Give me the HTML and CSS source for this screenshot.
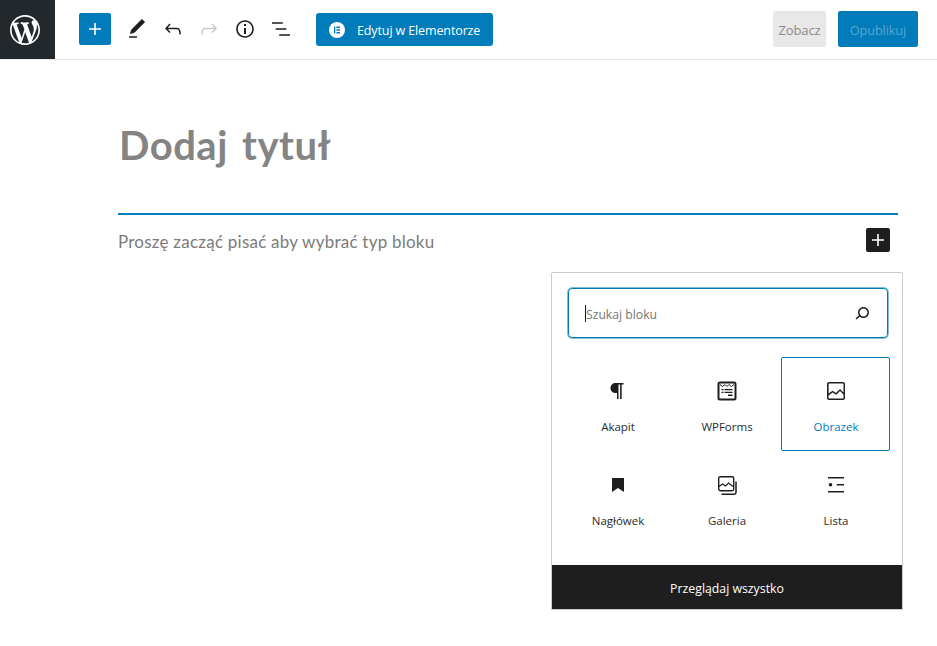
FILE: index.html
```html
<!DOCTYPE html>
<html lang="pl">
<head>
<meta charset="utf-8">
<title>Dodaj tytuł</title>
<link rel="stylesheet" href="styles.css">
</head>
<body>
<header class="toolbar">
  <a class="wp-logo"><svg viewBox="0 0 20 20" width="30" height="30"><path fill="#fff" d="M20 10c0-5.51-4.49-10-10-10C4.48 0 0 4.49 0 10c0 5.52 4.48 10 10 10 5.51 0 10-4.48 10-10zM7.78 15.37L4.37 6.22c.55-.02 1.17-.08 1.17-.08.5-.06.44-1.13-.06-1.11 0 0-1.45.11-2.37.11-.18 0-.37 0-.58-.01C4.12 2.69 6.87 1.11 10 1.11c2.33 0 4.45.87 6.05 2.34-.68-.11-1.65.39-1.65 1.58 0 .74.45 1.36.9 2.1.35.61.55 1.36.55 2.46 0 1.49-1.4 5-1.4 5l-3.03-8.37c.54-.02.82-.17.82-.17.5-.05.44-1.25-.06-1.22 0 0-1.44.12-2.38.12-.87 0-2.33-.12-2.33-.12-.5-.03-.56 1.2-.06 1.22l.92.08 1.26 3.41zM17.41 10c.24-.64.74-1.87.43-4.25.7 1.29 1.05 2.71 1.05 4.25 0 3.29-1.73 6.24-4.4 7.78.97-2.59 1.94-5.2 2.92-7.78zM6.1 18.09C3.12 16.65 1.11 13.53 1.11 10c0-1.3.23-2.48.72-3.59C3.25 10.3 4.67 14.2 6.1 18.09zm4.03-6.63l2.58 6.98c-.86.29-1.76.45-2.71.45-.79 0-1.57-.11-2.29-.33.81-2.38 1.62-4.74 2.42-7.1z"/></svg></a>
  <div class="tools">
    <span class="inserter"><svg viewBox="0 0 24 24" width="24" height="24"><path fill="#fff" d="M18 11.2h-5.2V6h-1.6v5.2H6v1.6h5.2V18h1.6v-5.2H18z"/></svg></span>
    <span class="tool"><svg viewBox="0 0 24 24" width="24" height="24"><path d="M20.1 5.1L16.9 2 6.2 12.7l-1.3 4.4 4.5-1.3L20.1 5.1zM4 20.8h8v-1.5H4v1.5z"/></svg></span>
    <span class="tool"><svg viewBox="0 0 24 24" width="24" height="24"><path d="M18.3 11.7c-.6-.6-1.4-.9-2.3-.9H6.7l2.9-3.3-1.1-1-4.5 5L8.5 16l1-1-2.7-2.7H16c.5 0 .9.2 1.3.5 1 1 1 3.4 1 4.5v.3h1.5v-.2c0-1.5 0-4.3-1.5-5.7z"/></svg></span>
    <span class="tool tool-off"><svg viewBox="0 0 24 24" width="24" height="24"><path d="M15.6 6.5l-1.1 1 2.9 3.3H8c-.9 0-1.7.3-2.3.9-1.4 1.5-1.4 4.2-1.4 5.6v.2h1.5v-.3c0-1.1 0-3.5 1-4.5.3-.3.7-.5 1.3-.5h9.2L14.5 15l1.1 1.1 4.6-4.6-4.6-5z"/></svg></span>
    <span class="tool"><svg viewBox="0 0 24 24" width="24" height="24"><path d="M12 3.2c-4.8 0-8.8 3.9-8.8 8.8 0 4.8 3.9 8.8 8.8 8.8 4.8 0 8.8-3.9 8.8-8.8 0-4.8-4-8.8-8.8-8.8zm0 16c-4 0-7.2-3.3-7.2-7.2C4.8 8 8 4.8 12 4.8s7.2 3.3 7.2 7.2c0 4-3.2 7.2-7.2 7.2zM11 17h2v-6h-2v6zm0-8h2V7h-2v2z"/></svg></span>
    <span class="tool"><svg viewBox="0 0 24 24" width="24" height="24"><path d="M13.8 5.2H3v1.5h10.8V5.2zm-3.6 12v1.5H21v-1.5H10.2zm7.2-6H6.6v1.5h10.8v-1.5z"/></svg></span>
    <a class="elementor-btn"><span class="e-badge"><svg viewBox="0 0 16 16" width="16" height="16"><circle cx="8" cy="8" r="8" fill="#fff"/><path fill="#007cba" d="M5 4.6h1.300v6.800H5zM7.400 4.600h3.600v1.300H7.400zM7.400 7.350h3.600v1.300H7.400zM7.400 10.100h3.600v1.300H7.400z"/></svg></span><span class="elementor-label">Edytuj w Elementorze</span></a>
  </div>
  <div class="actions">
    <a class="preview">Zobacz</a>
    <a class="publish">Opublikuj</a>
  </div>
</header>
<main class="editor">
  <h1 class="post-title">Dodaj tytuł</h1>
  <div class="block-row">
    <span class="placeholder">Proszę zacząć pisać aby wybrać typ bloku</span>
    <span class="add-block"><svg viewBox="0 0 24 24" width="24" height="24"><path fill="#fff" d="M18 11.2h-5.2V6h-1.6v5.2H6v1.6h5.2V18h1.6v-5.2H18z"/></svg></span>
  </div>
</main>
<section class="popover">
  <div class="popover-body">
    <div class="search">
      <span class="caret"></span><span class="search-text">Szukaj bloku</span>
      <svg class="search-icon" viewBox="0 0 24 24" width="24" height="24"><path d="M13.5 6C10.5 6 8 8.5 8 11.5c0 1.1.3 2.1.9 3l-3.4 3 1 1.1 3.4-2.9c1 .9 2.2 1.4 3.6 1.4 3 0 5.5-2.5 5.5-5.5C19 8.5 16.5 6 13.5 6zm0 9.5c-2.2 0-4-1.8-4-4s1.8-4 4-4 4 1.8 4 4-1.8 4-4 4z"/></svg>
    </div>
    <div class="grid">
      <div class="cell"><svg viewBox="0 0 24 24" width="24" height="24"><path d="M9.500 5.500H11v7H9.500c-2 0-3.500-1.500-3.500-3.500S7.500 5.500 9.500 5.500zM9.500 4H17.500v1.500h-1.800V20h-1.600V5.500h-1.600V20h-1.500v-6H9.500c-3 0-5-2.200-5-5 0-3 2.500-5 5-5z"/></svg><span>Akapit</span></div>
      <div class="cell"><svg viewBox="0 0 24 24" width="24" height="24"><rect x="3.500" y="3.500" width="17" height="17" rx="1.500" fill="none" stroke="#1e1e1e" stroke-width="2"/><path fill="none" stroke="#1e1e1e" d="M5 5.500l2.500 2 2.500-2 2 2 2-2 2.500 2 2.500-2"/><path fill="#1e1e1e" d="M6.500 10h2v1.300h-2zM9.500 10h8v1.300h-8zM6.500 12.700h2V14h-2zM9.500 12.700h8V14h-8zM13 15.500h4.500v1.500H13z"/></svg><span>WPForms</span></div>
      <div class="cell cell-active"><svg viewBox="0 0 24 24" width="24" height="24"><path d="M19 3H5c-1.100 0-2 .9-2 2v14c0 1.100.9 2 2 2h14c1.100 0 2-.9 2-2V5c0-1.100-.9-2-2-2zM5 4.500h14c.3 0 .5.2.5.5v8.400l-3-2.900c-.3-.3-.8-.3-1 0L11.900 14 9 12c-.3-.2-.6-.2-.8 0l-3.600 2.600V5c-.1-.3.1-.5.4-.5zm14 15H5c-.3 0-.5-.2-.5-.5v-2.400l4.100-3 3 1.900c.3.2.7.2.9-.1L16 12l3.500 3.400V19c0 .3-.2.5-.5.5z"/></svg><span>Obrazek</span></div>
      <div class="cell"><svg viewBox="0 0 24 24" width="24" height="24"><path d="M6 5h12v14l-6-4-6 4z"/></svg><span>Nagłówek</span></div>
      <div class="cell"><svg viewBox="0 0 24 24" width="24" height="24"><rect x="3.700" y="3.700" width="15" height="14" rx="1.600" fill="none" stroke="#1e1e1e" stroke-width="1.400"/><path fill="none" stroke="#1e1e1e" stroke-width="1.200" d="M4 13.500l3.500-2.500 3 2 3-3 4.500 3.500"/><path fill="none" stroke="#1e1e1e" stroke-width="1.500" d="M21 8.500v11c0 1-.7 1.700-1.700 1.700H6.500"/></svg><span>Galeria</span></div>
      <div class="cell"><svg viewBox="0 0 24 24" width="24" height="24"><path d="M4 4h16v1.400H4zM4 18h16v1.400H4zM12.700 11.100H20v1.400h-7.300z"/><circle cx="6.500" cy="11.800" r="1.800"/></svg><span>Lista</span></div>
    </div>
  </div>
  <div class="browse">Przeglądaj wszystko</div>
</section>
</body>
</html>
```
FILE: styles.css
```css
* { box-sizing: border-box; }
html, body { margin: 0; height: 100%; }
body {
  position: relative;
  width: 937px;
  height: 646px;
  overflow: hidden;
  background: #fff;
  color: #1e1e1e;
  font-family: "Open Sans", "Noto Sans", sans-serif;
}
.toolbar {
  display: flex;
  align-items: center;
  height: 60px;
  border-bottom: 1px solid #e8e8e8;
}
.wp-logo {
  display: flex;
  align-items: center;
  justify-content: center;
  flex: 0 0 55px;
  height: 59px;
  padding-right: 5px;
  background: #23282d;
}
.tools {
  display: flex;
  align-items: center;
  padding: 0 0 1px 24px;
  flex: 1;
}
.inserter {
  display: flex;
  align-items: center;
  justify-content: center;
  width: 32px;
  height: 32px;
  background: #007cba;
  border-radius: 2px;
  margin-right: 8px;
}
.tool {
  display: flex;
  align-items: center;
  justify-content: center;
  width: 36px;
  height: 36px;
}
.tool svg { fill: #1e1e1e; }
.tool-off svg { fill: #c9c9c9; }
.elementor-btn {
  display: flex;
  align-items: center;
  height: 33px;
  margin: 1px 0 0 17px;
  padding: 0 13px;
  background: #007cba;
  border-radius: 3px;
  color: #fff;
  font-size: 12.500px;
  letter-spacing: -0.120px;
  white-space: nowrap;
}
.e-badge { display: flex; margin-right: 12px; }
.elementor-label { margin-top: 2px; }
.actions {
  display: flex;
  align-items: center;
  gap: 12px;
  padding: 0 19px 1px 0;
}
.preview, .publish {
  display: flex;
  align-items: center;
  justify-content: center;
  height: 36px;
  padding-top: 2px;
  border-radius: 2px;
  letter-spacing: -0.100px;
}
.preview { width: 53px; background: #e8e8e8; color: #8a8a8a; font-size: 13px; }
.publish { width: 80px; background: #007cba; color: #5ba5d2; font-size: 12.700px; }
.editor { padding: 0 39px 0 118px; }
.post-title {
  margin: 0;
  height: 155px;
  padding: 61px 0 0 1px;
  border-bottom: 2px solid #007cba;
  font-family: "Lato", sans-serif;
  font-size: 40px;
  font-weight: 700;
  line-height: 48px;
  letter-spacing: 0.500px;
  word-spacing: 4px;
  color: #848484;
}
.block-row {
  display: flex;
  align-items: center;
  justify-content: space-between;
  height: 50px;
  padding-right: 8px;
}
.placeholder {
  margin-top: 3px;
  font-family: "Lato", sans-serif;
  font-size: 17px;
  color: #7b7b7b;
  letter-spacing: 0.230px;
}
.add-block {
  display: flex;
  align-items: center;
  justify-content: center;
  width: 24px;
  height: 24px;
  background: #1e1e1e;
  border-radius: 2px;
}
.popover {
  position: absolute;
  left: 551px;
  top: 272px;
  width: 352px;
  height: 338px;
  display: flex;
  flex-direction: column;
  border: 1px solid #ccc;
  border-top-left-radius: 2px;
  border-top-right-radius: 2px;
  background: #fff;
}
.popover-body { flex: 1; padding: 15px 12px 0 16px; }
.search {
  display: flex;
  align-items: center;
  height: 50px;
  width: 320px;
  padding: 0 13px 0 16px;
  border: 1px solid #007cba;
  box-shadow: 0 0 0 0.500px #007cba;
  border-radius: 4px;
  font-size: 12.200px;
}
.caret { width: 1px; height: 17px; background: #1e1e1e; }
.search-text { flex: 1; margin-top: 2px; color: #757575; }
.search-icon { fill: #1e1e1e; }
.grid {
  display: grid;
  grid-template-columns: repeat(3, 109px);
  grid-auto-rows: 94px;
  margin: 19px 0 0 -5px;
}
.cell {
  display: flex;
  flex-direction: column;
  align-items: center;
  padding-top: 21px;
  border: 1px solid transparent;
  border-radius: 2px;
  font-size: 11.500px;
  color: #2c2c2c;
}
.cell svg { fill: #1e1e1e; }
.cell span { margin: 16px 0 0 1px; line-height: 16px; }
.cell-active { border-color: #007cba; color: #007cba; }
.browse {
  display: flex;
  align-items: center;
  justify-content: center;
  height: 44px;
  padding-top: 2px;
  background: #1e1e1e;
  color: #fff;
  font-size: 12.300px;
}
```
